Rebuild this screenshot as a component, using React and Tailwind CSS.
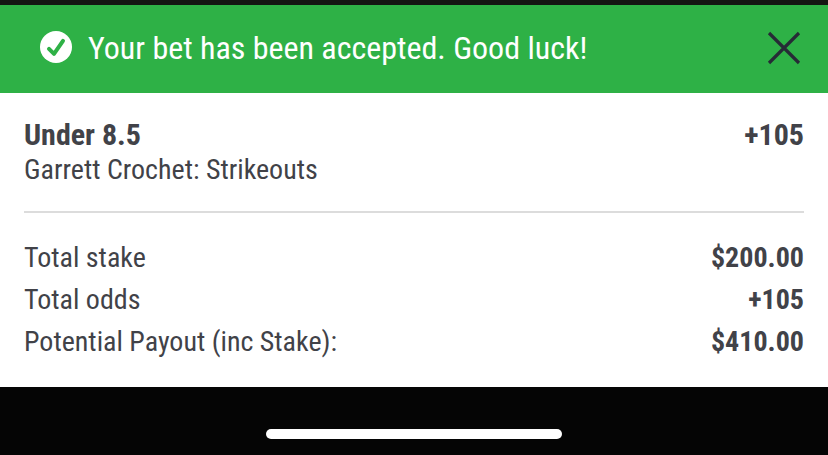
export default function App() {
  const font = "[font-family:Roboto,sans-serif] [font-stretch:75%]";
  return (
    <div className={`w-[828px] h-[455px] flex flex-col overflow-hidden bg-white text-[#414248] ${font}`}>
      <div className="h-[5px] bg-[#141612]" />
      <div className="h-[88px] bg-[#2eb146] flex items-center justify-between pl-[40px] pr-[27px]">
        <div className="flex items-center gap-[16px] -mt-[4px]">
          <svg width="32" height="32" viewBox="0 0 32 32">
            <circle cx="16" cy="16" r="16" fill="#fff" />
            <path d="M9 17.8 L14 22.8 L23 9.8" fill="none" stroke="#2eb146" strokeWidth="4" strokeLinecap="round" strokeLinejoin="round" />
          </svg>
          <span className="text-[32px] leading-[36px] text-white mt-[1px]">Your bet has been accepted. Good luck!</span>
        </div>
        <svg width="34" height="34" viewBox="0 0 34 34" className="-mt-[3px]">
          <path d="M2 2 L32 32 M32 2 L2 32" stroke="#262b36" strokeWidth="3.2" fill="none" />
        </svg>
      </div>
      <div className="h-[294px] px-[24px] pt-[26px]">
        <div className="pb-[24px] border-b-2 border-[#dcdcdc]">
          <div className="flex justify-between text-[30px] leading-[32px] font-bold">
            <span>Under 8.5</span>
            <span>+105</span>
          </div>
          <div className="text-[28px] leading-[34px] mt-[2px]">Garrett Crochet: Strikeouts</div>
        </div>
        <div className="pt-[24px] text-[28px] leading-[42px]">
          <div className="flex justify-between"><span>Total stake</span><span className="font-bold">$200.00</span></div>
          <div className="flex justify-between"><span>Total odds</span><span className="font-bold">+105</span></div>
          <div className="flex justify-between"><span>Potential Payout (inc Stake):</span><span className="font-bold">$410.00</span></div>
        </div>
      </div>
      <div className="flex-1 bg-[#050505] flex justify-center pt-[42px]">
        <div className="w-[296px] h-[10px] rounded-full bg-white" />
      </div>
    </div>
  );
}
